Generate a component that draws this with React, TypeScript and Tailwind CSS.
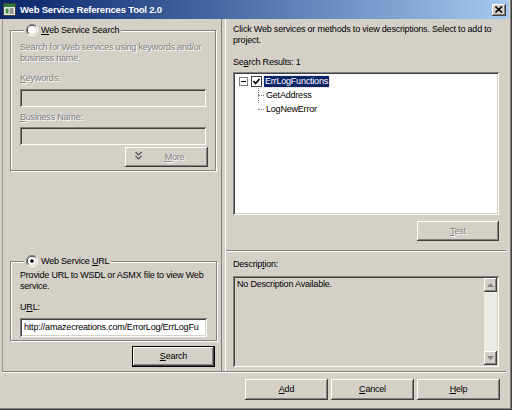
import React from "react";

const raised =
  "shadow-[inset_-1px_-1px_#404040,inset_1px_1px_#ffffff,inset_-2px_-2px_#808080,inset_2px_2px_#d4d0c8]";
const sunken =
  "shadow-[inset_1px_1px_#808080,inset_-1px_-1px_#ffffff,inset_2px_2px_#404040,inset_-2px_-2px_#d4d0c8]";
const dim = "text-[#808080] [text-shadow:1px_1px_0_#ffffff]";

interface IBtn {
  label: string;
  accel?: number;
  disabled?: boolean;
  primary?: boolean;
  className?: string;
  icon?: React.ReactNode;
}

const Btn = ({ label, accel = 0, disabled, primary, className = "", icon }: IBtn): JSX.Element => {
  const text = (
    <span className={disabled ? dim : "text-black"}>
      {label.slice(0, accel)}
      <u>{label[accel]}</u>
      {label.slice(accel + 1)}
    </span>
  );
  return (
    <div
      className={`relative flex items-center justify-center bg-[#d4d0c8] ${
        primary ? "border border-black" : ""
      } ${raised} ${className}`}
    >
      {icon && <span className="absolute left-[10px] top-[4px]">{icon}</span>}
      {text}
    </div>
  );
};

const Radio = ({ checked }: { checked?: boolean }) => (
  <svg width="12" height="12" viewBox="0 0 12 12">
    <path d="M10 2 A5.5 5.5 0 0 0 2 10" stroke="#808080" strokeWidth="1" fill="none" />
    <path d="M9.3 2.8 A4.5 4.5 0 0 0 2.8 9.3" stroke="#404040" strokeWidth="1" fill="none" />
    <path d="M2 10 A5.5 5.5 0 0 0 10 2" stroke="#ffffff" strokeWidth="1" fill="none" />
    <circle cx="6" cy="6" r="4" fill="#ffffff" />
    {checked && <circle cx="6" cy="6" r="1.8" fill="#000" />}
  </svg>
);

const GroupBox = ({
  legend,
  checked,
  className = "",
  children,
}: {
  legend: React.ReactNode;
  checked?: boolean;
  className?: string;
  children: React.ReactNode;
}) => (
  <fieldset
    className={`border border-[#808080] shadow-[inset_1px_1px_#ffffff,1px_1px_#ffffff] px-[9px] ${className}`}
  >
    <legend className="ml-[4px] px-[2px] bg-[#d4d0c8] flex items-center gap-[3px] h-[12px]">
      <Radio checked={checked} />
      <span className="text-black">{legend}</span>
    </legend>
    {children}
  </fieldset>
);

export default function App(): JSX.Element {
  return (
    <div className="w-[512px] h-[410px] bg-[#d4d0c8] flex flex-col overflow-hidden font-['Liberation_Sans',Arial,sans-serif] text-[9px] tracking-[-0.2px] leading-[11px] shadow-[inset_-1px_-1px_#404040,inset_-2px_-2px_#808080]">
      {/* Title bar ============================================ */}
      <div className="h-[19px] mr-[3px] flex items-center pl-[3px] pr-[3px] bg-gradient-to-r from-[#0a246a] to-[#a6caf0]">
        <svg width="13" height="13" viewBox="0 0 13 13" className="mr-[4px]">
          <rect x="0.5" y="0.5" width="12" height="12" fill="#e8e8e0" stroke="#404040" />
          <rect x="1" y="1" width="11" height="3" fill="#2a7a3a" />
          <rect x="2.5" y="5.5" width="3" height="5" fill="#3c9a4a" />
          <rect x="6.5" y="5.5" width="4" height="1" fill="#404040" />
          <rect x="6.5" y="7.5" width="4" height="1" fill="#404040" />
          <rect x="6.5" y="9.5" width="4" height="1" fill="#404040" />
        </svg>
        <span className="text-white font-bold text-[9.5px] tracking-[-0.2px]">
          Web Service References Tool 2.0
        </span>
        <div className={`ml-auto w-[14px] h-[12px] bg-[#d4d0c8] flex items-center justify-center ${raised}`}>
          <svg width="8" height="7" viewBox="0 0 8 7">
            <path d="M0.5 0.5 L7 6.5 M7 0.5 L0.5 6.5" stroke="#000" strokeWidth="1.6" />
          </svg>
        </div>
      </div>

      {/* Panes ============================================ */}
      <div className="h-[353px] flex ml-[2px] mr-[6px] border-b border-[#808080] shadow-[0_1px_#ffffff]">
        {/* Left pane */}
        <div className="w-[217px] flex flex-col border-l border-[#9a9890] pl-[7px] pr-[4px] pt-[5px]">
          <GroupBox legend={<><u>W</u>eb Service Search</>} className="h-[147px]">
            <p className={`${dim} mt-[6px]`}>
              Search for Web services using keywords and/or
              <br />
              business name.
            </p>
            <p className={`${dim} mt-[9px]`}>
              <u>K</u>eywords:
            </p>
            <div className={`mt-[5px] h-[18px] w-[186px] bg-[#d4d0c8] ${sunken}`} />
            <p className={`${dim} mt-[5px]`}>
              <u>B</u>usiness Name:
            </p>
            <div className={`mt-[4px] h-[18px] w-[186px] bg-[#d4d0c8] ${sunken}`} />
            <div className="flex justify-end mt-[2px] -mr-[2px]">
              <Btn
                label="More"
                disabled
                className="w-[83px] h-[20px] pl-[16px]"
                icon={
                  <svg width="7" height="9" viewBox="0 0 7 9">
                    <path d="M0.5 1 L3.5 4 L6.5 1 M0.5 5 L3.5 8 L6.5 5" stroke="#555" strokeWidth="1.2" fill="none" />
                  </svg>
                }
              />
            </div>
          </GroupBox>

          <div className="flex-1" />

          <GroupBox legend={<>Web Service <u>U</u>RL</>} checked className="h-[86px]">
            <p className="text-black mt-[3px]">
              Provide URL to WSDL or ASMX file to view Web
              <br />
              service.
            </p>
            <p className="text-black mt-[10px]">
              U<u>R</u>L:
            </p>
            <div className={`mt-[5px] h-[19px] w-[187px] bg-white ${sunken} flex items-center pl-[4px] overflow-hidden whitespace-nowrap`}>
              http://amazecreations.com/ErrorLog/ErrLogFu
            </div>
          </GroupBox>
          <div className="flex justify-end mt-[5px] mb-[4px]">
            <Btn label="Search" primary className="w-[83px] h-[21px]" />
          </div>
        </div>

        {/* Splitter */}
        <div className="w-[5px] border-l border-[#808080] border-r border-r-white ml-[2px]" />

        {/* Right pane */}
        <div className="flex-1 flex flex-col">
          <div className="h-[232px] pl-[7px] pr-[7px] pt-[5px] border-b border-[#808080] shadow-[0_1px_#ffffff]">
            <p className="text-black">
              Click Web services or methods to view descriptions. Select to add to
              <br />
              project.
            </p>
            <p className="text-black mt-[11px]">
              Se<u>a</u>rch Results: 1
            </p>
            <div className={`mt-[4px] h-[143px] bg-white ${sunken} pt-[3px] pl-[6px]`}>
              <div className="flex items-center h-[12px]">
                <svg width="9" height="9" viewBox="0 0 9 9">
                  <rect x="0.5" y="0.5" width="8" height="8" fill="#fff" stroke="#808080" />
                  <path d="M2 4.5 H7" stroke="#000" />
                </svg>
                <svg width="11" height="11" viewBox="0 0 11 11" className="ml-[3px]">
                  <rect x="0.5" y="0.5" width="10" height="10" fill="#fff" stroke="#404040" />
                  <path d="M2.5 5 L4.5 7.5 L8.5 3" stroke="#000" strokeWidth="1.6" fill="none" />
                </svg>
                <span className="ml-[2px] bg-[#0a246a] text-white px-[1px] h-[11px] leading-[11px] outline outline-1 outline-dotted outline-[#d4d0c8]">
                  ErrLogFunctions
                </span>
              </div>
              <div className="relative pl-[27px]">
                <div className="absolute left-[19px] top-[0px] h-[15px] border-l border-dotted border-[#808080]" />
                <div className="flex items-center h-[14px] mt-[1px]">
                  <span className="absolute left-[19px] w-[6px] border-t border-dotted border-[#808080]" />
                  GetAddress
                </div>
                <div className="flex items-center h-[14px]">
                  <span className="absolute left-[19px] w-[6px] border-t border-dotted border-[#808080]" />
                  LogNewError
                </div>
              </div>
            </div>
            <div className="flex justify-end mt-[6px]">
              <Btn label="Test" disabled className="w-[82px] h-[20px]" />
            </div>
          </div>

          <div className="flex-1 pl-[7px] pr-[7px] pt-[8px] pb-[4px] flex flex-col">
            <p className="text-black">
              Descrip<u>t</u>ion:
            </p>
            <div className={`mt-[6px] flex-1 bg-[#d4d0c8] ${sunken} flex p-[2px]`}>
              <div className="flex-1 pl-[2px] pt-[1px] text-black">No Description Available.</div>
              <div className="w-[13px] flex flex-col bg-[#eceae4]">
                <div className={`h-[14px] bg-[#d4d0c8] ${raised} flex items-center justify-center`}>
                  <svg width="7" height="4" viewBox="0 0 7 4">
                    <path d="M3.5 0 L7 4 H0 Z" fill="#808080" />
                  </svg>
                </div>
                <div className="flex-1" />
                <div className={`h-[14px] bg-[#d4d0c8] ${raised} flex items-center justify-center`}>
                  <svg width="7" height="4" viewBox="0 0 7 4">
                    <path d="M0 0 H7 L3.5 4 Z" fill="#808080" />
                  </svg>
                </div>
              </div>
            </div>
          </div>
        </div>
      </div>

      {/* Bottom buttons ============================================ */}
      <div className="flex justify-end gap-[3px] pt-[7px] pr-[12px]">
        <Btn label="Add" className="w-[83px] h-[21px]" />
        <Btn label="Cancel" className="w-[83px] h-[21px]" />
        <Btn label="Help" className="w-[83px] h-[21px]" />
      </div>
    </div>
  );
}
